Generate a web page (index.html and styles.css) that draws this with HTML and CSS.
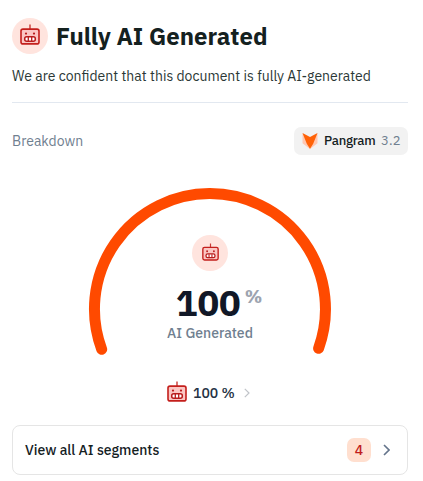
FILE: index.html
```html
<!DOCTYPE html>
<html lang="en">
<head>
  <meta charset="UTF-8">
  <meta name="viewport" content="width=device-width, initial-scale=1">
  <title>Fully AI Generated</title>
  <link rel="stylesheet" href="styles.css">
</head>
<body>
  <svg width="0" height="0" class="sprite">
    <symbol id="robot" viewBox="0 0 20 21">
      <path d="M10 .5V5" stroke="#c93a36" stroke-width="1.4"/>
      <rect x="1" y="5.1" width="18" height="14.8" rx="2" fill="#fbc6c3" stroke="#c41f1c" stroke-width="1.6"/>
      <circle cx="6" cy="9.6" r="1.1" fill="#b91c1c"/>
      <circle cx="14" cy="9.6" r="1.1" fill="#b91c1c"/>
      <rect x="4.7" y="12.8" width="10.600" height="4.400" rx="2" fill="#fff" stroke="#b91c1c" stroke-width="1.5"/>
      <path d="M8.3 13v4M11.7 13v4" stroke="#b91c1c" stroke-width="1.3"/>
    </symbol>
  </svg>

  <div class="header">
    <span class="avatar"><svg class="robot"><use href="#robot"/></svg></span>
    <h1>Fully AI Generated</h1>
  </div>
  <p class="summary">We are confident that this document is fully AI-generated</p>

  <div class="breakdown">
    <span class="label">Breakdown</span>
    <div class="model">
      <svg width="16" height="18" viewBox="0 0 16 18">
        <path d="M.5 1.5v9.700L8 17l7.500-5.800V1.500L8 7z" fill="#ffc8b3"/>
        <path d="M.5 1L8 5l7.500-4-4.300 10.800L8 16.800l-3.200-5z" fill="#ff6207"/>
      </svg>
      <span class="name">Pangram</span>
      <span class="version">3.2</span>
    </div>
  </div>

  <div class="gauge">
    <svg class="arc" width="244" height="172" viewBox="0 0 244 172">
      <path d="M13.700 162.300A115.500 115.500 0 1 1 230.600 161.300" fill="none" stroke="#ff4a00" stroke-width="11" stroke-linecap="round"/>
    </svg>
    <div class="reading">
      <span class="avatar"><svg class="robot small"><use href="#robot"/></svg></span>
      <div class="value"><span class="number">100</span><span class="percent">%</span></div>
      <div class="caption">AI Generated</div>
    </div>
  </div>

  <div class="legend">
    <svg class="robot"><use href="#robot"/></svg>
    <span class="share">100 %</span>
    <svg width="6" height="10" viewBox="0 0 6 10"><path d="M.8.8L5 5 .8 9.200" fill="none" stroke="#c0c4c9" stroke-width="1.200"/></svg>
  </div>

  <div class="segments">
    <span class="title">View all AI segments</span>
    <span class="count">4</span>
    <svg width="7" height="12" viewBox="0 0 7 12"><path d="M1 1l5 5-5 5" fill="none" stroke="#64748b" stroke-width="1.600"/></svg>
  </div>
</body>
</html>
```
FILE: styles.css
```css
* {
  box-sizing: border-box;
}

body {
  margin: 0;
  padding: 18px 15px 0 12px;
  height: 481px;
  overflow: hidden;
  background: #fff;
  color: #14211f;
  font-family: "IBM Plex Sans", Roboto, "Noto Sans", sans-serif;
  font-size: 14px;
  line-height: 20px;
}

svg {
  display: block;
  flex-shrink: 0;
}

.sprite {
  position: absolute;
}

.header {
  display: flex;
  align-items: center;
  gap: 8px;
  height: 36px;
}

h1 {
  margin: 0;
  font-size: 24px;
  line-height: 36px;
  font-weight: 700;
  white-space: nowrap;
}

.avatar {
  display: flex;
  align-items: center;
  justify-content: center;
  width: 36px;
  height: 36px;
  border-radius: 50%;
  background: #ffe4de;
}

.robot {
  width: 20px;
  height: 21px;
  margin-top: -3px;
}

.robot.small {
  width: 17px;
  height: 18px;
  margin-top: -2px;
}

.summary {
  margin: 12px 0 0;
  height: 37px;
  border-bottom: 1px solid #e2e8f0;
  color: #2b3836;
  white-space: nowrap;
}

.breakdown {
  display: flex;
  align-items: center;
  justify-content: space-between;
  margin-top: 24px;
  height: 28px;
}

.label {
  color: #708090;
}

.model {
  display: flex;
  align-items: center;
  width: 114px;
  height: 28px;
  padding-left: 8px;
  border-radius: 7px;
  background: #f2f2f2;
  font-size: 13px;
}

.name {
  margin-left: 6px;
  width: 52px;
  font-weight: 500;
  letter-spacing: -0.25px;
}

.version {
  margin-left: 5px;
  color: #708090;
  letter-spacing: 0.2px;
}

.gauge {
  display: grid;
  justify-content: center;
  width: 396px;
  height: 172px;
  margin-top: 32px;
}

.arc,
.reading {
  grid-area: 1 / 1;
}

.reading {
  display: flex;
  flex-direction: column;
  align-items: center;
  padding-top: 48px;
}

.value {
  display: flex;
  height: 40px;
  margin: 12px 0 0 18px;
}

.number {
  color: #111827;
  font-size: 36px;
  line-height: 40px;
  font-weight: 700;
}

.percent {
  margin: 4px 0 0 4px;
  color: #9ca3af;
  font-size: 18px;
  line-height: 20px;
  font-weight: 700;
}

.caption {
  color: #708090;
  font-weight: 500;
}

.legend {
  display: flex;
  align-items: center;
  height: 24px;
  margin: 22px 0 0 155px;
}

.share {
  width: 43px;
  margin: 0 8px 0 6px;
  color: #253244;
  font-weight: 500;
  white-space: nowrap;
}

.segments {
  display: flex;
  align-items: center;
  height: 50px;
  margin-top: 20px;
  padding: 0 17px 0 12px;
  border: 1px solid #e5e5e5;
  border-radius: 8px;
}

.title {
  flex: 1;
  font-weight: 500;
}

.count {
  width: 24px;
  height: 24px;
  margin-right: 12px;
  border-radius: 7px;
  background: #ffdfcf;
  color: #c11d1d;
  font-weight: 500;
  line-height: 24px;
  text-align: center;
}
```
